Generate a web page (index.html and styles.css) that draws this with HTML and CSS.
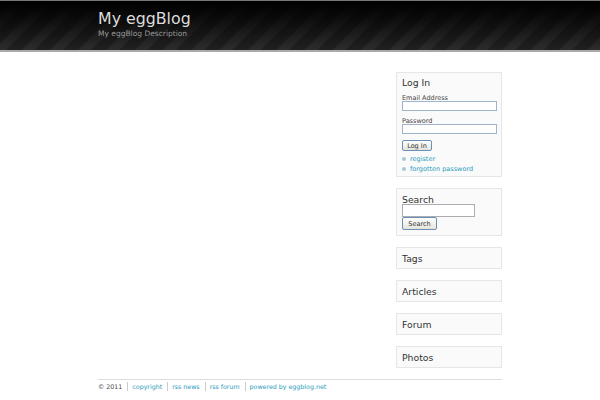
FILE: index.html
```html
<!DOCTYPE html>
<html lang="en">
<head>
<meta charset="utf-8">
<title>My eggBlog</title>
<link rel="stylesheet" href="styles.css">
</head>
<body>
<header class="masthead">
  <div class="wrap">
    <h1 class="site-title">My eggBlog</h1>
    <p class="site-desc">My eggBlog Description</p>
  </div>
</header>
<div class="wrap">
  <div class="content">
    <aside class="sidebar">
      <section class="box box-login">
        <h2>Log In</h2>
        <form class="login">
          <label for="em">Email Address</label>
          <input id="em" class="field" type="text">
          <label for="pw" class="second">Password</label>
          <input id="pw" class="field" type="password">
          <button type="button" class="btn btn-small">Log In</button>
        </form>
        <ul class="links">
          <li><a href="#">register</a></li>
          <li><a href="#">forgotten password</a></li>
        </ul>
      </section>
      <section class="box box-search">
        <h2>Search</h2>
        <input class="search-field" type="text">
        <button type="button" class="btn btn-search">Search</button>
      </section>
      <section class="box box-closed"><h2>Tags</h2></section>
      <section class="box box-closed"><h2>Articles</h2></section>
      <section class="box box-closed"><h2>Forum</h2></section>
      <section class="box box-closed"><h2>Photos</h2></section>
    </aside>
  </div>
  <footer class="foot">
    <span>&copy; 2011</span>
    <a href="#">copyright</a>
    <a href="#">rss news</a>
    <a href="#">rss forum</a>
    <a href="#">powered by eggblog.net</a>
  </footer>
</div>
</body>
</html>
```
FILE: styles.css
```css
html, body { margin: 0; padding: 0; background: #fff; }
body { font-family: "DejaVu Sans", Verdana, sans-serif; color: #333; height: 400px; overflow: hidden; }
.wrap { width: 404px; margin: 0 auto; }
.masthead {
  height: 49px;
  border-top: 1px solid #777;
  border-bottom: 2px solid #aaa;
  background:
    linear-gradient(rgba(0,0,0,1) 0, rgba(0,0,0,.7) 35%, rgba(0,0,0,0) 100%),
    repeating-linear-gradient(135deg, #202020 0, #202020 9px, #2c2c2c 11px, #2c2c2c 18px, #202020 20px);
}
.site-title { margin: 0; padding-top: 8px; font-size: 15.8px; line-height: 20px; font-weight: normal; color: #ddd; }
.site-desc { margin: 0; padding-top: 0; font-size: 7.5px; line-height: 9px; color: #999; }
.content { display: flex; justify-content: flex-end; padding-top: 20px; height: 307px; }
.sidebar { width: 106px; display: flex; flex-direction: column; gap: 11px; }
.box { box-sizing: border-box; border: 1px solid #e6e6e6; background: #fafafa; padding: 0 5px; }
.box h2 { margin: 0; font-size: 9.3px; font-weight: normal; color: #333; }
.box-login { height: 105px; padding-top: 4px; }
.box-login h2 { line-height: 11px; margin-bottom: 2px; }
.login { display: flex; flex-direction: column; align-items: flex-start; }
.login label { font-size: 6.5px; line-height: 9px; margin-top: 4px; margin-bottom: -2px; color: #444; }
.login label.second { margin-top: 6px; }
.field { box-sizing: border-box; width: 95px; height: 10px; margin: 0; padding: 0; border: 1px solid #9db4ca; background: #fff; }
.btn { box-sizing: border-box; margin: 0; padding: 0; border: 1px solid #6a8fb5; border-radius: 2px; background: linear-gradient(#fff, #e4e4dc); color: #333; font-family: inherit; font-size: 6.5px; display: block; }
.btn-small { width: 30px; height: 11px; margin-top: 6px; }
.links { list-style: none; margin: 3px 0 0; padding: 0; }
.links li { font-size: 6.5px; line-height: 10px; padding-left: 8px; position: relative; }
.links li::before { content: ""; position: absolute; left: 0; top: 3px; width: 4px; height: 4px; border-radius: 50%; background: #a5c9d6; }
.links a, .foot a { color: #2a9bbd; text-decoration: none; }
.box-search { height: 48px; padding-top: 5px; }
.box-search h2 { line-height: 12px; margin-bottom: -2px; }
.search-field { box-sizing: border-box; display: block; width: 73px; height: 13px; margin: 0; padding: 0; border: 1px solid #abadb3; background: #fff; }
.btn-search { width: 35px; height: 13px; margin-top: 0; }
.box-closed { height: 22px; display: flex; align-items: center; }
.foot { border-top: 1px solid #ddd; margin-top: 0; padding-top: 2px; display: flex; align-items: center; font-size: 6.3px; line-height: 9px; color: #444; }
.foot a { border-left: 1px solid #ccc; margin-left: 5px; padding-left: 4px; }
```
